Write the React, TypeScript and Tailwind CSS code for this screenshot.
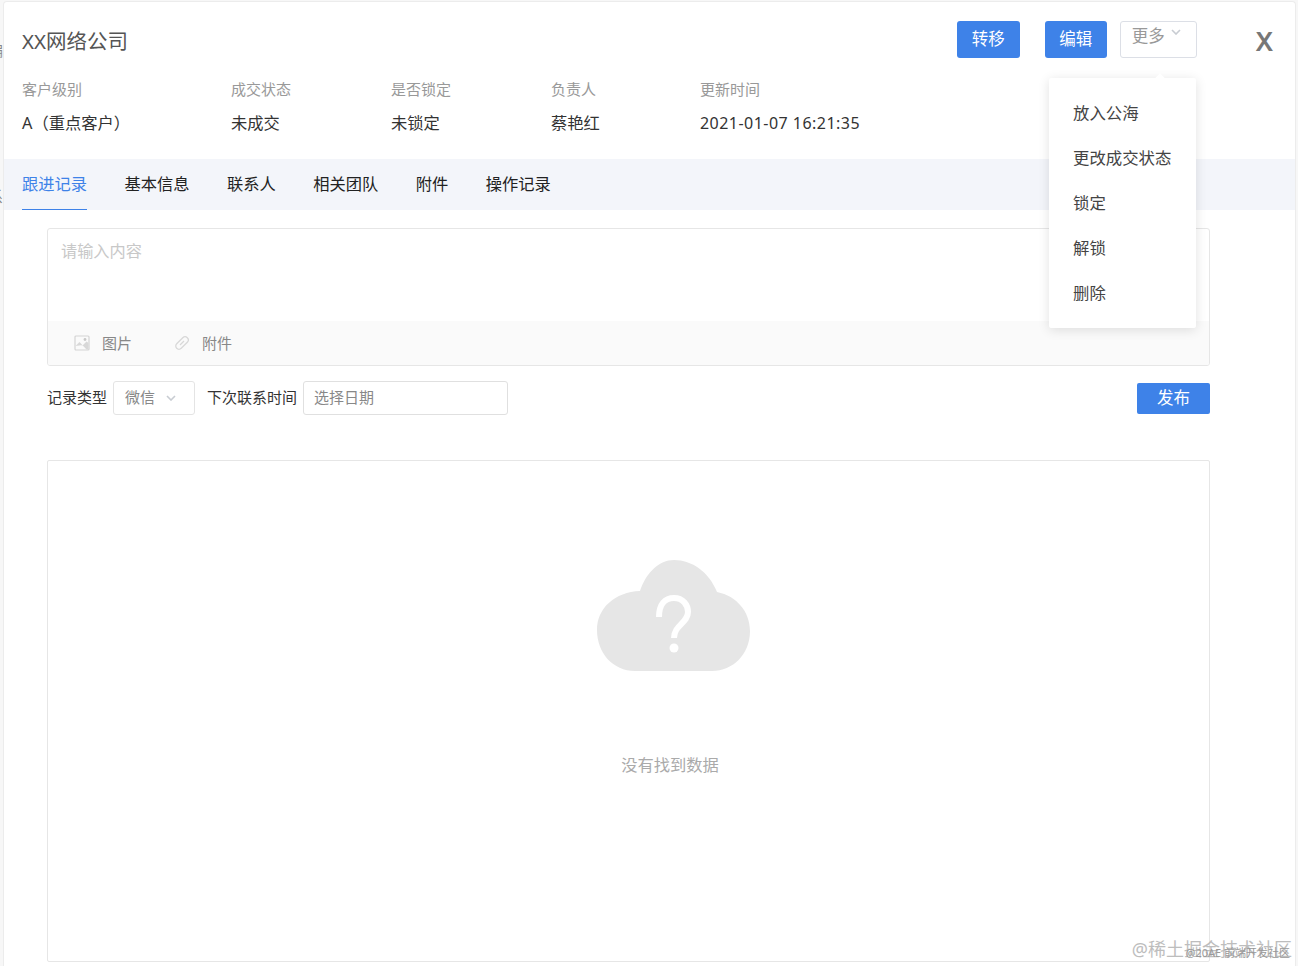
const font = { fontFamily: '"Noto Sans", "Noto Sans CJK SC", sans-serif' };

const infoItems = [
  { label: "客户级别", value: "A（重点客户）", width: "w-[209px]", valueClass: "text-[16.3px]" },
  { label: "成交状态", value: "未成交", width: "w-[160px]", valueClass: "text-[16.3px]" },
  { label: "是否锁定", value: "未锁定", width: "w-[160px]", valueClass: "text-[16.3px]" },
  { label: "负责人", value: "蔡艳红", width: "w-[149px]", valueClass: "text-[16.3px]" },
  { label: "更新时间", value: "2021-01-07 16:21:35", width: "w-[200px]", valueClass: "text-[16px] tracking-[0.47px]" },
];

const tabs = ["跟进记录", "基本信息", "联系人", "相关团队", "附件", "操作记录"];
const menuItems = ["放入公海", "更改成交状态", "锁定", "解锁", "删除"];

function Chevron({ className }: { className: string }) {
  return (
    <svg viewBox="0 0 10 6" className={className} fill="none" stroke="currentColor" strokeWidth="1.6">
      <path d="M1 1l4 4 4-4" />
    </svg>
  );
}

function ImageIcon() {
  return (
    <svg viewBox="0 0 16 16" className="w-[16px] h-[16px]" fill="none">
      <rect x="1" y="1" width="14" height="14" rx="1" stroke="#d4d4d4" strokeWidth="1.2" />
      <path d="M1.5 11l4-4 7 7.5H14.5V8l-2-1.5L9 10" fill="#d8d8d8" />
      <circle cx="11" cy="4.5" r="1.4" fill="#c8c8c8" />
    </svg>
  );
}

function LinkIcon() {
  return (
    <svg viewBox="0 0 16 16" className="w-[16px] h-[16px]" fill="none" stroke="#d8d8d8" strokeWidth="1.3">
      <rect x="0.5" y="4.8" width="15" height="6.4" rx="3.2" transform="rotate(-45 8 8)" />
      <path d="M6 10l4-4" />
    </svg>
  );
}

function EmptyCloud() {
  return (
    <svg viewBox="0 0 153 111" className="w-[153px] h-[111px]">
      <path
        d="M38 111C16 111 0 93 0 70C0 48 18 32 43 31C49 13 62 0 77 0C95 0 112 12 120 32C140 36 153 52 153 71C153 94 136 111 115 111Z"
        fill="#e6e6e6"
      />
      <path d="M62 57C62 44 68 38 77 38C86 38 91 45 91 52C91 63 77 65 77 78" fill="none" stroke="#fff" strokeWidth="6" />
      <circle cx="77" cy="88" r="4.5" fill="#fff" />
    </svg>
  );
}

export default function App() {
  return (
    <div style={font} className="relative w-[1298px] h-[966px] overflow-hidden bg-[#f7f7f7] pt-px pl-[3px] pr-[2px]">
      <div className="absolute left-[-12px] top-[38px] text-[15px] leading-[24px] text-[#888]">编</div>
      <div className="absolute left-[-12px] top-[184px] text-[15px] leading-[24px] text-[#888]">系</div>

      <div className="relative h-[965px] bg-white rounded-t-[4px] border-t border-x border-[#ececec]">
        <div className="h-[157px] pl-[18px] pr-[22px]">
          <div className="flex items-center h-[76px]">
            <h1 className="mt-[3px] text-[20.5px] text-[#555] font-normal leading-none">XX网络公司</h1>
            <div className="ml-auto flex items-center -mt-[2px]">
              <button className="w-[63px] h-[37px] rounded-[3px] bg-[#3e82e8] text-white text-[16.5px]">转移</button>
              <button className="ml-[25px] w-[62px] h-[37px] rounded-[3px] bg-[#3e82e8] text-white text-[16.5px]">编辑</button>
              <button className="ml-[13px] w-[77px] h-[37px] rounded-[3px] border border-[#dcdfe6] bg-white text-[#999] text-[16.5px] flex items-start justify-center gap-[6px] pt-[2px] pr-[4px]">
                <span>更多</span>
                <Chevron className="w-[10px] h-[6px] mt-[5px] text-[#c8ccd2]" />
              </button>
              <span className="ml-[59px] mt-[2px] text-[27px] leading-none text-[#777] font-semibold">X</span>
            </div>
          </div>
          <div className="flex">
            {infoItems.map((item) => (
              <div key={item.label} className={item.width}>
                <div className="text-[15px] leading-[22px] text-[#999]">{item.label}</div>
                <div className={`mt-[12px] leading-[22px] text-[#333] ${item.valueClass}`}>{item.value}</div>
              </div>
            ))}
          </div>
        </div>

        <div className="h-[51px] bg-[#f3f5fa] pl-[18px] flex gap-[37.5px]">
          {tabs.map((tab, i) => (
            <div
              key={tab}
              className={
                i === 0
                  ? "h-[51px] leading-[50px] text-[16.25px] text-[#3e82e8] border-b border-[#3e82e8]"
                  : "h-[51px] leading-[50px] text-[16.25px] text-[#222]"
              }
            >
              {tab}
            </div>
          ))}
        </div>

        <div className="pl-[43px] pr-[85px] pt-[18px]">
          <div className="h-[138px] border border-[#e6e6e6] rounded-[3px] flex flex-col overflow-hidden">
            <div className="h-[92px] px-[13px] pt-[10px] text-[16.2px] leading-[24px] text-[#c8c8c8]">请输入内容</div>
            <div className="flex-1 bg-[#fafafa] flex items-center pl-[26px] text-[15px] text-[#888]">
              <ImageIcon />
              <span className="ml-[12px]">图片</span>
              <span className="ml-[42px]"><LinkIcon /></span>
              <span className="ml-[12px]">附件</span>
            </div>
          </div>

          <div className="mt-[14px] flex items-center h-[35px]">
            <span className="text-[15px] text-[#333]">记录类型</span>
            <div className="ml-[6px] w-[82px] h-[34px] border border-[#e4e4e4] rounded-[3px] flex items-center pl-[11px] text-[15px] text-[#888]">
              微信
              <Chevron className="w-[10px] h-[6px] ml-[11px] text-[#c8ccd2]" />
            </div>
            <span className="ml-[12px] text-[15px] text-[#333]">下次联系时间</span>
            <div className="ml-[6px] w-[205px] h-[34px] border border-[#e0e0e0] rounded-[3px] flex items-center pl-[10px] text-[15px] text-[#888]">
              选择日期
            </div>
            <button className="ml-auto mt-[2px] w-[73px] h-[31px] rounded-[2px] bg-[#3e82e8] text-white text-[16.5px]">发布</button>
          </div>

          <div className="mt-[45px] h-[502px] border border-[#e6e6e6] rounded-[2px] flex flex-col items-center pt-[99px]">
            <div className="ml-[89px]">
              <EmptyCloud />
            </div>
            <div className="mt-[82px] ml-[83px] text-[16.3px] leading-[24px] text-[#aaa]">没有找到数据</div>
          </div>
        </div>
      </div>

      <div className="absolute left-[1049px] top-[78px] w-[147px] h-[250px] bg-white rounded-[2px] shadow-[0_2px_12px_rgba(0,0,0,0.12)] pt-[12px] pl-[24px]">
        <div className="absolute -top-[3px] left-[107px] w-[8px] h-[8px] rotate-45 bg-white" />
        {menuItems.map((item) => (
          <div key={item} className="h-[45px] leading-[45px] text-[16.4px] text-[#444]">{item}</div>
        ))}
      </div>

      <div className="absolute right-[6px] bottom-[5px] text-[18px] leading-[24px] text-[#bdbdbd]">@稀土掘金技术社区</div>
      <div className="absolute right-[8px] bottom-[6px] text-[11px] leading-[14px] text-[#999]">@20AE 前端开发社区</div>
    </div>
  );
}
